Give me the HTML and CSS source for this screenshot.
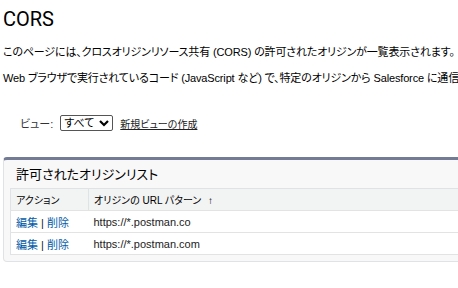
FILE: index.html
```html
<!DOCTYPE html>
<html lang="ja">
<head>
    <meta charset="UTF-8">
    <title>CORS</title>
    <link rel="stylesheet" href="styles.css">
</head>
<body>

<div class="page">
    <h1 class="title">CORS</h1>
    <p class="desc">このページには、クロスオリジンリソース共有 (CORS) の許可されたオリジンが一覧表示されます。</p>
    <p class="desc">Web ブラウザで実行されているコード (JavaScript など) で、特定のオリジンから Salesforce に通信できるようにします。</p>

    <!-- View selector -->
    <div class="view-row">
        <span class="view-label">ビュー:</span>
        <select class="view-select">
            <option>すべて</option>
        </select>
        <a href="#" class="view-link">新規ビューの作成</a>
    </div>

    <!-- List panel -->
    <div class="panel">
        <h2 class="panel-title">許可されたオリジンリスト</h2>
        <table class="list">
            <tr class="head">
                <th class="col-action">アクション</th>
                <th>オリジンの URL パターン <span class="arrow">↑</span></th>
            </tr>
            <tr>
                <td><a href="#">編集</a> | <a href="#">削除</a></td>
                <td>https://*.postman.co</td>
            </tr>
            <tr>
                <td><a href="#">編集</a> | <a href="#">削除</a></td>
                <td>https://*.postman.com</td>
            </tr>
        </table>
    </div>
</div>

</body>
</html>
```

FILE: styles.css
```css
body {
    margin: 0;
    padding: 0;
    background: #fff;
    font-family: Arial, "Liberation Sans", "Noto Sans CJK JP", sans-serif;
    font-feature-settings: "palt";
    color: #000;
    overflow: hidden;
}
.page {
    padding: 7px 0 0 3px;
    width: 720px;
}
.title {
    margin: 0 0 14px 0;
    font-family: Roboto, Arial, sans-serif;
    font-weight: normal;
    font-size: 20px;
    line-height: 24px;
}
.desc {
    margin: 0 0 12px 0;
    font-size: 11px;
    line-height: 14px;
    letter-spacing: -0.15px;
    white-space: nowrap;
}
.view-row {
    display: flex;
    align-items: center;
    gap: 7px;
    margin: 30px 0 0 17px;
    font-size: 11px;
}
.view-label {
    color: #333;
}
.view-select {
    -webkit-appearance: none;
    appearance: none;
    font-family: inherit;
    font-feature-settings: "palt";
    font-size: 11px;
    color: #000;
    height: 16px;
    padding: 0 16px 0 3px;
    border: 1px solid #555;
    border-radius: 2px;
    background: #fff url("data:image/svg+xml,%3Csvg xmlns='http://www.w3.org/2000/svg' width='10' height='8' viewBox='0 0 10 8'%3E%3Cpath d='M1 2l4 4 4-4' fill='none' stroke='%23000' stroke-width='2.2'/%3E%3C/svg%3E") no-repeat right 3px center;
}
.view-link {
    color: #222;
    font-size: 10px;
    text-decoration: underline;
}
.panel {
    margin-top: 26px;
    background: #f8f8f8;
    border: 1px solid #e0e3e5;
    border-top: 3px solid #747c95;
    border-radius: 4px;
    padding: 0 0 6px 6px;
}
.panel-title {
    margin: 0;
    padding: 7px 0 5px 6px;
    font-size: 13px;
    font-weight: normal;
    line-height: 16px;
}
.list {
    width: 100%;
    border-collapse: collapse;
    background: #fff;
    font-size: 11px;
}
.list th, .list td {
    text-align: left;
    padding: 0 5px;
    height: 21px;
    border-bottom: 1px solid #e3e3e3;
}
.list tr:first-child th {
    border-top: 1px solid #e0e3e5;
}
.list .head th {
    background: #f2f3f3;
    font-weight: normal;
    font-size: 10px;
    color: #000;
    border-left: 1px solid #e0e3e5;
}
.list .head th.col-action {
    width: 67px;
}
.list td:first-child {
    border-left: 1px solid #e0e3e5;
}
.list a {
    color: #015ba7;
    text-decoration: none;
}
.list td {
    color: #222;
}
.arrow {
    margin-left: 4px;
}
```
